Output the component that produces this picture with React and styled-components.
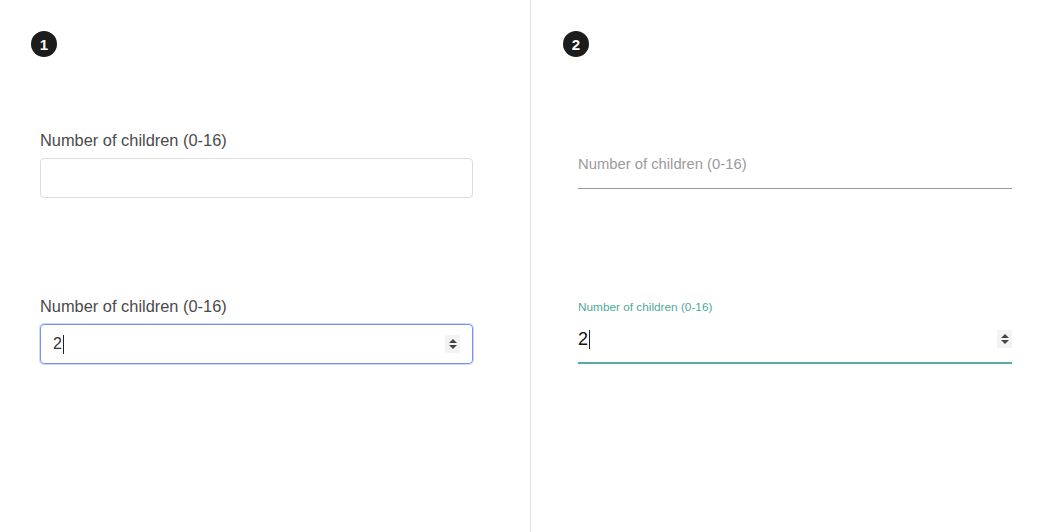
import React from 'react';
import styled, { createGlobalStyle } from 'styled-components';

const GlobalStyle = createGlobalStyle`
  html, body {
    margin: 0;
    padding: 0;
    background: #fff;
    font-family: 'Liberation Sans', Arial, sans-serif;
  }
`;

const Page = styled.div`
  display: grid;
  grid-template-columns: 530px 1fr;
  width: 1064px;
  height: 532px;
  overflow: hidden;
`;

const Panel = styled.section`
  padding: 31px ${({ $right }) => $right}px 0 ${({ $left }) => $left}px;
  border-left: ${({ $divider }) => ($divider ? '1px solid #e2e2e2' : 'none')};
`;

const Badge = styled.div`
  width: 26px;
  height: 26px;
  border-radius: 50%;
  background: #1c1c1c;
  color: #fff;
  font-size: 15px;
  font-weight: 700;
  display: flex;
  align-items: center;
  justify-content: center;
  margin-left: ${({ $shift }) => $shift}px;
`;

const Stack = styled.div`
  display: flex;
  flex-direction: column;
  gap: ${({ $gap }) => $gap}px;
  margin-top: ${({ $top }) => $top}px;
`;

const Group = styled.div`
  display: flex;
  flex-direction: column;
`;

const Label = styled.div`
  font-size: 16.4px;
  color: #4a4a4a;
  line-height: 18px;
  margin-bottom: 9px;
`;

const Box = styled.div`
  position: relative;
  height: 40px;
  box-sizing: border-box;
  border: 1px solid ${({ $focus }) => ($focus ? '#7294ef' : '#dcdcdc')};
  border-radius: 4px;
  box-shadow: ${({ $focus }) => ($focus ? '0 0 0 1px rgba(114,148,239,0.35)' : 'none')};
  display: flex;
  align-items: center;
  padding: 0 12px;
  font-size: 16px;
  color: #333;
`;

const Caret = styled.span`
  display: inline-block;
  width: 1px;
  height: 19px;
  background: #222;
  margin-left: 1px;
`;

const Spin = styled.div`
  position: absolute;
  right: ${({ $right }) => $right}px;
  top: ${({ $top }) => $top};
  transform: translateY(-50%);
  width: 15px;
  height: 18px;
  background: #f3f3f3;
  display: flex;
  flex-direction: column;
  align-items: center;
  justify-content: center;
  gap: 2px;
`;

const Tri = styled.span`
  width: 0;
  height: 0;
  border-left: 4px solid transparent;
  border-right: 4px solid transparent;
  ${({ $up }) => ($up ? 'border-bottom: 4px solid #444;' : 'border-top: 4px solid #444;')}
`;

const MatGroup = styled.div`
  display: flex;
  flex-direction: column;
  height: ${({ $h }) => $h}px;
  justify-content: flex-end;
`;

const FloatLabel = styled.div`
  font-size: ${({ $small }) => ($small ? '11.8px' : '14.8px')};
  color: ${({ $color }) => $color};
  line-height: 14px;
  margin-bottom: ${({ $mb }) => $mb}px;
`;

const Line = styled.div`
  position: relative;
  height: ${({ $active }) => ($active ? '22px' : '0')};
  padding-bottom: ${({ $active }) => ($active ? '12px' : '0')};
  border-bottom: ${({ $active }) => ($active ? '2px solid #55ad9f' : '1px solid #9a9a9a')};
  display: flex;
  align-items: center;
  font-size: 18px;
  color: #111;
`;

const Spinner = ({ right, top = '50%' }) => (
  <Spin $right={right} $top={top}>
    <Tri $up />
    <Tri />
  </Spin>
);

export default function App() {
  return (
    <>
      <GlobalStyle />
      <Page>
        <Panel $left={40} $right={57}>
          <Badge $shift={-9}>1</Badge>
          <Stack $gap={99} $top={74}>
            <Group>
              <Label>Number of children (0-16)</Label>
              <Box />
            </Group>
            <Group>
              <Label>Number of children (0-16)</Label>
              <Box $focus>
                2<Caret />
                <Spinner right={12} />
              </Box>
            </Group>
          </Stack>
        </Panel>
        <Panel $divider $left={47} $right={52}>
          <Badge $shift={-15}>2</Badge>
          <Stack $gap={107} $top={0}>
            <MatGroup $h={132}>
              <FloatLabel $color="#9a9a9a" $mb={17}>Number of children (0-16)</FloatLabel>
              <Line />
            </MatGroup>
            <MatGroup $h={68}>
              <FloatLabel $small $color="#4fa99b" $mb={14}>Number of children (0-16)</FloatLabel>
              <Line $active>
                2<Caret />
                <Spinner right={0} top="11px" />
              </Line>
            </MatGroup>
          </Stack>
        </Panel>
      </Page>
    </>
  );
}
